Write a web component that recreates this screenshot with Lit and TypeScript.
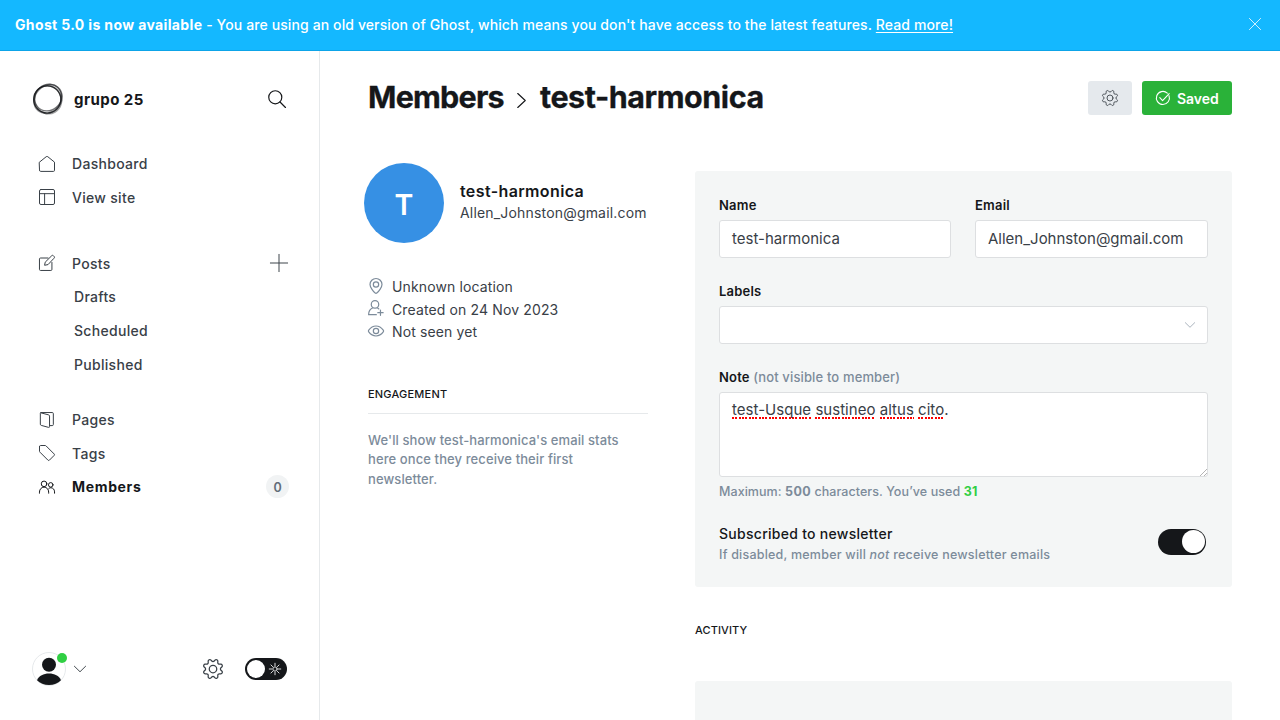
import { LitElement, html, css, svg } from "lit";
import { customElement } from "lit/decorators.js";

const cog = svg`<path d="M10.546 2.438a1.957 1.957 0 0 0 2.908 0L14.4 1.4a1.959 1.959 0 0 1 3.41 1.413l-.071 1.4A1.958 1.958 0 0 0 19.79 6.27l1.4-.071A1.959 1.959 0 0 1 22.6 9.606l-1.04.94a1.959 1.959 0 0 0 0 2.909l1.04.94a1.959 1.959 0 0 1-1.413 3.41l-1.4-.071a1.958 1.958 0 0 0-2.056 2.056l.071 1.4A1.959 1.959 0 0 1 14.4 22.6l-.941-1.04a1.959 1.959 0 0 0-2.908 0L9.606 22.6A1.959 1.959 0 0 1 6.2 21.192l.072-1.4a1.958 1.958 0 0 0-2.056-2.056l-1.4.071A1.958 1.958 0 0 1 1.4 14.4l1.041-.94a1.959 1.959 0 0 0 0-2.909L1.4 9.606A1.958 1.958 0 0 1 2.809 6.2l1.4.071a1.958 1.958 0 0 0 2.058-2.06L6.2 2.81A1.959 1.959 0 0 1 9.606 1.4z"/><circle cx="12" cy="12" r="4.5"/>`;

const icons: Record<string, unknown> = {
  home: svg`<path d="M.75 9.2 10.8 1.1a1.9 1.9 0 0 1 2.4 0L23.25 9.2v12.300a1.600 1.600 0 0 1-1.600 1.600H2.350a1.600 1.600 0 0 1-1.600-1.600z"/>`,
  site: svg`<rect x=".75" y=".75" width="22.5" height="22.5" rx="2.2"/><path d="M.75 7h22.5M8.4 7v16"/>`,
  posts: svg`<path d="M13.5 4.5H2.3A1.6 1.6 0 0 0 .7 6.1v15.5a1.6 1.6 0 0 0 1.6 1.6h15.5a1.6 1.6 0 0 0 1.6-1.6V11.2"/><path d="m13 14.5-4.6.9.9-4.6L19.1 1.1a1.7 1.7 0 0 1 2.5 0l1.1 1.1a1.7 1.7 0 0 1 0 2.5z"/>`,
  pages: svg`<path d="M3.3 .8h16.6a1.6 1.6 0 0 1 1.6 1.6v16.4a1.6 1.6 0 0 1-1.6 1.6h-3.4M2.6 1.2l11.8 3.1a1.9 1.9 0 0 1 1.4 1.8v15.6a1.3 1.3 0 0 1-1.7 1.3L3.4 20.1A1.9 1.9 0 0 1 2 18.3V2.1A1.3 1.3 0 0 1 3.3.8"/>`,
  tags: svg`<path d="M.75 2.25v6.9a2.3 2.3 0 0 0 .66 1.6l12 12a1.6 1.6 0 0 0 2.2 0l7.1-7.1a1.6 1.6 0 0 0 0-2.2l-12-12a2.3 2.3 0 0 0-1.6-.7h-6.9a1.5 1.5 0 0 0-1.46 1.5z"/>`,
  members: svg`<circle cx="7.6" cy="7.3" r="4.2"/><circle cx="17.6" cy="8.8" r="3.4"/><path d="M.7 21.3v-1.6c0-4.2 3-7.5 6.9-7.5s6.9 3.3 6.9 7.5v1.6M14.6 14.4c.9-.9 2-1.3 3.2-1.3 3.1 0 5.5 2.5 5.5 6.2v2"/>`,
  pin: svg`<path d="M12 .75a9 9 0 0 1 9 9c0 4.1-5.3 11-7.8 12.9a2 2 0 0 1-2.4 0C8.3 20.75 3 13.85 3 9.75a9 9 0 0 1 9-9z"/><circle cx="12" cy="9.75" r="4"/>`,
  created: svg`<circle cx="10.5" cy="6.6" r="5.6"/><path d="M12.5 22H.9c0-5.6 2.4-8.6 6.5-10.3M13.6 11.7c1.1.5 1.9 1 2.7 1.7M18.7 15v8M14.700 19h8"/>`,
  eye: svg`<path d="M12 4.5c4.3 0 8.5 2.9 10.9 6.1a2.3 2.3 0 0 1 0 2.8c-2.4 3.2-6.6 6.1-10.9 6.1s-8.5-2.9-10.9-6.1a2.3 2.3 0 0 1 0-2.8C3.5 7.4 7.7 4.5 12 4.5z"/><circle cx="12" cy="12" r="4"/>`,
  check: svg`<path d="M22.4 8.2a11.2 11.2 0 1 1-3-4.5M6.5 11.5l4.8 5L22.6 4.6"/>`,
  search: svg`<circle cx="9.7" cy="9.7" r="8.7"/><path d="m16 16 7.3 7.3"/>`,
  plus: svg`<path d="M12 .5v23M.5 12h23"/>`,
  chevron: svg`<path d="m.8 6.5 11.2 11 11.2-11"/>`,
  right: svg`<path d="m6 .8 12 11.2-12 11.2"/>`,
  close: svg`<path d="m.8.8 22.4 22.4M23.2.8.8 23.2"/>`,
  sun: svg`<circle cx="12" cy="12" r="4.3"/><path d="M12 .5v5M12 18.5v5M.5 12h5M18.5 12h5M3.9 3.9l3.3 3.3M16.8 16.8l3.3 3.3M20.1 3.9l-3.3 3.3M7.2 16.8l-3.3 3.3"/>`,
  cog,
};

const icon = (name: string, cls = "") =>
  html`<svg class="icon ${cls}" viewBox="0 0 24 24">${icons[name]}</svg>`;

@customElement("app-root")
export class AppRoot extends LitElement {
  static styles = css`
    :host { display: flex; flex-direction: column; width: 1280px; height: 720px; overflow: hidden; background: #fff;
      font-family: Inter, sans-serif; font-size: 14px; letter-spacing: .2px; color: #394047; }
    * { box-sizing: border-box; }
    .icon { display: block; flex: none; width: 16px; height: 16px; fill: none; stroke: currentColor; stroke-width: 1.5;
      stroke-linecap: round; stroke-linejoin: round; overflow: visible; }
    .banner { flex: none; height: 51px; border-bottom: 1px solid #0da4e8; background: #14b8ff; color: #fff; display: flex;
      justify-content: space-between; align-items: center; padding: 0 19px 0 15px; font-weight: 500; letter-spacing: .11px; line-height: 20px; }
    .banner b { font-weight: 700; letter-spacing: .36px; }
    .banner u { text-underline-offset: 2px; }
    .i-close { width: 12px; height: 12px; stroke-width: 1.6; margin-top: -3px; }
    .main { flex: 1; min-height: 0; display: flex; }
    .side { width: 320px; flex: none; border-right: 1px solid #e6e9eb; display: flex; flex-direction: column; }
    .brand { display: flex; align-items: center; padding: 31px 33px 0 32px; height: 65px; }
    .logo { width: 32px; height: 32px; fill: none; stroke: #15171a; }
    .brand-name { margin-left: 10px; flex: 1; font-size: 15px; font-weight: 700; letter-spacing: .45px; color: #15171a; padding-top: 1px; }
    .i-search { width: 18px; height: 18px; color: #15171a; stroke-width: 1.6; margin-top: -1px; }
    .group { padding: 0 31px 0 39px; }
    .g1 { margin-top: 31px; } .g2 { margin-top: 32.2px; } .g3 { margin-top: 21.6px; }
    .row { display: flex; align-items: center; height: 33.66px; font-size: 14px; font-weight: 500; letter-spacing: .3px; }
    .row .txt { margin-left: 17px; flex: 1; }
    .row.sub .txt { margin-left: 35px; }
    .row.active { color: #15171a; font-weight: 700; letter-spacing: .66px; }
    .g2 .icon { margin-top: -1px; }
    .i-plus { width: 18px; height: 18px; stroke-width: 1.3; }
    .count { width: 23px; height: 23px; border-radius: 50%; background: #f1f3f4; color: #626d79; font-size: 12.5px; font-weight: 600;
      display: flex; align-items: center; justify-content: center; letter-spacing: 0; margin-right: -1px; padding-top: 1px; }
    .foot { margin-top: auto; height: 68px; margin-bottom: 17px; display: flex; align-items: center; padding: 0 32px; }
    .user { position: relative; width: 34px; height: 34px; }
    .user svg { display: block; width: 34px; height: 34px; }
    .online { position: absolute; left: 25px; top: 1px; width: 10px; height: 10px; border-radius: 50%; background: #30cf43; }
    .i-down { width: 12px; height: 12px; margin-left: 8px; margin-right: auto; stroke-width: 1.9; }
    .i-cog { width: 20px; height: 20px; color: #394047; margin-right: 22px; }
    .night { width: 42px; height: 22px; border-radius: 11px; background: #15171a; color: #fff; display: flex; align-items: center;
      justify-content: space-between; padding: 0 6px 0 2px; }
    .knob { width: 18px; height: 18px; border-radius: 50%; background: #fff; }
    .i-sun { width: 12px; height: 12px; stroke-width: 1.7; }
    .content { flex: 1; padding: 0 48px; min-width: 0; }
    .head { display: flex; align-items: center; height: 94px; margin-bottom: 2px; color: #15171a; }
    .head h1 { margin: -2px 0 0; display: flex; align-items: center; font-size: 30.5px; line-height: 38px; font-weight: 700; letter-spacing: -.46px;
      flex: 1; -webkit-text-stroke: .3px #15171a; }
    .head h1 .parent { letter-spacing: -.78px; width: 136px; white-space: nowrap; }
    .i-right { width: 15px; height: 15px; margin: 7px 11px 0 10px; stroke-width: 1.8; }
    .gear { width: 44px; height: 34px; border-radius: 3px; background: #e5e9ed; display: flex; align-items: center; justify-content: center; margin-right: 10px; color: #394047; }
    .i-gear { stroke-width: 1.3; }
    .saved { width: 90px; height: 34px; border-radius: 3px; background: #2ab239; color: #fff; font-weight: 600; letter-spacing: -.02px; display: flex;
      align-items: center; padding-left: 14px; }
    .saved span { padding-top: 1px; }
    .i-check { width: 14px; height: 14px; margin-right: 7px; margin-top: -1px; stroke-width: 1.9; }
    .cols { display: grid; grid-template-columns: 280px 537px; column-gap: 47px; align-items: start; }
    .left { padding-top: 16px; }
    .person { display: flex; align-items: center; height: 80px; margin-left: -4px; }
    .who { margin-top: -2px; }
    .avatar { width: 80px; height: 80px; border-radius: 50%; background: #3690e4; color: #fff; display: flex; align-items: center;
      justify-content: center; font-size: 28.5px; font-weight: 600; letter-spacing: 0; margin-right: 16px; padding-top: 2px; }
    .pname { font-size: 16px; font-weight: 600; letter-spacing: .38px; color: #15171a; line-height: 22px; }
    .pmail { line-height: 22px; letter-spacing: .18px; }
    .facts { margin-top: 32.4px; }
    .fact { display: flex; align-items: center; height: 22.6px; gap: 8px; }
    .fact span { letter-spacing: .13px; }
    .fact .icon { color: #7c8b9a; stroke-width: 1.8; margin-top: -2px; }
    .cap { font-size: 11px; font-weight: 500; color: #15171a; line-height: 16px; }
    .engage { margin-top: 42.6px; height: 28px; border-bottom: 1px solid #e6e9eb; }
    .hint { margin: 17px 0 0; font-size: 13px; line-height: 19.5px; font-weight: 500; letter-spacing: .1px; color: #7c8b9a; }
    .card { height: 416px; margin-top: 24px; border-radius: 3px; background: #f4f6f6; padding: 24px; }
    .pair { display: grid; grid-template-columns: 232px 233px; column-gap: 24px; }
    .label { font-size: 13px; font-weight: 600; color: #15171a; line-height: 20px; height: 25px; }
    .label .opt { font-weight: 500; letter-spacing: .14px; color: #7c8b9a; }
    .field { height: 38px; border: 1px solid #dddfe1; border-radius: 3px; background: #fff; display: flex; align-items: center;
      padding: 0 12px 2px; font-size: 15px; letter-spacing: 0; }
    .select { justify-content: flex-end; padding-bottom: 0; }
    .i-sel { width: 10px; height: 10px; color: #abb4be; stroke-width: 2.4; }
    .block { margin-top: 23px; }
    .area { position: relative; height: 85px; align-items: flex-start; padding-top: 6px; line-height: 22px; letter-spacing: .03px; }
    .sp { background: repeating-linear-gradient(90deg, #f00 0 2px, transparent 2px 3.33px) 0 100% / 100% 2px no-repeat; }
    .grip { position: absolute; right: 0; bottom: 0; width: 8px; height: 8px; stroke: #b4b4b4; }
    .used { font-size: 12.5px; font-weight: 500; letter-spacing: .06px; color: #7c8b9a; line-height: 20px; margin-top: 5px; }
    .used b { font-weight: 700; letter-spacing: .4px; } .used .n { color: #30cf43; }
    .news { display: flex; align-items: center; justify-content: space-between; margin-top: 22px; padding-right: 2px; }
    .nt { font-size: 14px; font-weight: 500; letter-spacing: .28px; color: #15171a; line-height: 20px; }
    .nd { font-size: 12.5px; font-weight: 500; letter-spacing: .22px; color: #7c8b9a; line-height: 21px; }
    .switch { width: 48px; height: 26px; border-radius: 13px; background: #15171a; display: flex; justify-content: flex-end; padding: 1.5px 1px;
      margin-top: -6px; }
    .switch .knob { width: 23px; height: 23px; }
    .activity { margin-top: 35px; letter-spacing: .1px; }
    .empty { margin-top: 43px; height: 80px; border-radius: 3px; background: #f4f6f6; }
  `;

  private item(name: string, label: string, cls = "", extra: unknown = "") {
    return html`<div class="row ${cls}">${name ? icon(name) : ""}<span class="txt">${label}</span>${extra}</div>`;
  }

  render() {
    return html`
      <div class="banner">
        <span class="msg"><b>Ghost 5.0 is now available</b> - You are using an old version of Ghost, which means you don't have access to the latest features. <u>Read more!</u></span>
        ${icon("close", "i-close")}
      </div>
      <div class="main">
        <nav class="side">
          <div class="brand">
            <svg class="logo" viewBox="0 0 32 32">
              <circle cx="15.2" cy="16.4" r="13.6" stroke-width="1.2" opacity=".85" />
              <ellipse cx="17" cy="15" rx="14" ry="12.8" stroke-width="1.4" opacity=".6" transform="rotate(-40 16 16)" />
              <ellipse cx="16" cy="16" rx="15.2" ry="13" stroke-width="1.8" opacity=".45" transform="rotate(-50 16 16)" />
              <ellipse cx="16.6" cy="16.4" rx="14.2" ry="13.4" stroke-width="1.6" opacity=".4" transform="rotate(60 16 16)" />
            </svg>
            <span class="brand-name">grupo 25</span>${icon("search", "i-search")}
          </div>
          <div class="group g1">${this.item("home", "Dashboard")}${this.item("site", "View site")}</div>
          <div class="group g2">
            ${this.item("posts", "Posts", "", icon("plus", "i-plus"))}
            ${this.item("", "Drafts", "sub")}${this.item("", "Scheduled", "sub")}${this.item("", "Published", "sub")}
          </div>
          <div class="group g3">
            ${this.item("pages", "Pages")}${this.item("tags", "Tags")}
            ${this.item("members", "Members", "active", html`<span class="count">0</span>`)}
          </div>
          <div class="foot">
            <div class="user">
              <svg viewBox="0 0 34 34">
                <circle cx="17" cy="17" r="16.5" fill="#fff" stroke="#e6e9eb" />
                <circle cx="17" cy="12.8" r="7" fill="#15171a" />
                <path d="M5 28.3c2-4.5 6.5-6.7 12-6.7s10 2.2 12 6.7c-3 3.200-7 4.700-12 4.700s-9-1.500-12-4.700z" fill="#15171a" />
              </svg>
              <span class="online"></span>
            </div>
            ${icon("chevron", "i-down")}${icon("cog", "i-cog")}
            <div class="night"><span class="knob"></span>${icon("sun", "i-sun")}</div>
          </div>
        </nav>
        <main class="content">
          <header class="head">
            <h1><span class="parent">Members</span>${icon("right", "i-right")}<span>test-harmonica</span></h1>
            <div class="gear">${icon("cog", "i-gear")}</div>
            <div class="saved">${icon("check", "i-check")}<span>Saved</span></div>
          </header>
          <div class="cols">
            <section class="left">
              <div class="person">
                <div class="avatar">T</div>
                <div class="who"><div class="pname">test-harmonica</div><div class="pmail">Allen_Johnston@gmail.com</div></div>
              </div>
              <div class="facts">
                <div class="fact">${icon("pin")}<span>Unknown location</span></div>
                <div class="fact">${icon("created")}<span>Created on 24 Nov 2023</span></div>
                <div class="fact">${icon("eye")}<span>Not seen yet</span></div>
              </div>
              <div class="cap engage">ENGAGEMENT</div>
              <p class="hint">We'll show test-harmonica's email stats<br />here once they receive their first<br />newsletter.</p>
            </section>
            <section>
              <div class="card">
                <div class="pair">
                  <div><div class="label">Name</div><div class="field">test-harmonica</div></div>
                  <div><div class="label">Email</div><div class="field">Allen_Johnston@gmail.com</div></div>
                </div>
                <div class="block"><div class="label">Labels</div><div class="field select">${icon("chevron", "i-sel")}</div></div>
                <div class="block">
                  <div class="label">Note <span class="opt">(not visible to member)</span></div>
                  <div class="field area"><span><span class="sp">test-Usque</span> <span class="sp">sustineo</span> <span class="sp">altus</span> <span class="sp">cito</span>.</span><svg class="grip" viewBox="0 0 8 8"><path d="M1 8 8 1M5 8l3-3" /></svg></div>
                  <div class="used">Maximum: <b>500</b> characters. You’ve used <b class="n">31</b></div>
                </div>
                <div class="news">
                  <div><div class="nt">Subscribed to newsletter</div><div class="nd">If disabled, member will <i>not</i> receive newsletter emails</div></div>
                  <div class="switch"><span class="knob"></span></div>
                </div>
              </div>
              <div class="cap activity">ACTIVITY</div>
              <div class="empty"></div>
            </section>
          </div>
        </main>
      </div>`;
  }
}
